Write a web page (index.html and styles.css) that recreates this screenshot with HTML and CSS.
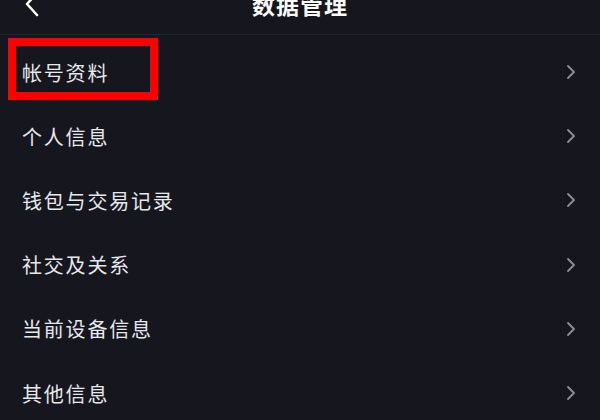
FILE: index.html
```html
<!DOCTYPE html>
<html lang="zh">
<head>
<meta charset="utf-8">
<link rel="stylesheet" href="styles.css">
</head>
<body>
<div class="page">
  <header class="topbar">
    <svg class="back" width="16" height="26" viewBox="0 0 16 26"><path d="M13 2 L3 13 L13 24" fill="none" stroke="#ffffff" stroke-width="2.6" stroke-linecap="round" stroke-linejoin="round"/></svg>
    <div class="title">数据管理</div>
  </header>
  <ul class="list">
    <li class="row highlight"><span class="label">帐号资料</span><svg class="chev" width="10" height="16" viewBox="0 0 10 16"><path d="M2 2 L8 8 L2 14" fill="none" stroke="#8e8e94" stroke-width="1.8" stroke-linecap="round" stroke-linejoin="round"/></svg><span class="mark"></span></li>
    <li class="row"><span class="label">个人信息</span><svg class="chev" width="10" height="16" viewBox="0 0 10 16"><path d="M2 2 L8 8 L2 14" fill="none" stroke="#8e8e94" stroke-width="1.8" stroke-linecap="round" stroke-linejoin="round"/></svg></li>
    <li class="row"><span class="label">钱包与交易记录</span><svg class="chev" width="10" height="16" viewBox="0 0 10 16"><path d="M2 2 L8 8 L2 14" fill="none" stroke="#8e8e94" stroke-width="1.8" stroke-linecap="round" stroke-linejoin="round"/></svg></li>
    <li class="row"><span class="label">社交及关系</span><svg class="chev" width="10" height="16" viewBox="0 0 10 16"><path d="M2 2 L8 8 L2 14" fill="none" stroke="#8e8e94" stroke-width="1.8" stroke-linecap="round" stroke-linejoin="round"/></svg></li>
    <li class="row"><span class="label">当前设备信息</span><svg class="chev" width="10" height="16" viewBox="0 0 10 16"><path d="M2 2 L8 8 L2 14" fill="none" stroke="#8e8e94" stroke-width="1.8" stroke-linecap="round" stroke-linejoin="round"/></svg></li>
    <li class="row"><span class="label">其他信息</span><svg class="chev" width="10" height="16" viewBox="0 0 10 16"><path d="M2 2 L8 8 L2 14" fill="none" stroke="#8e8e94" stroke-width="1.8" stroke-linecap="round" stroke-linejoin="round"/></svg></li>
  </ul>
</div>
</body>
</html>
```
FILE: styles.css
```css
html, body {
  margin: 0;
  padding: 0;
  background: #16161f;
}
.page {
  width: 600px;
  height: 420px;
  overflow: hidden;
  background: #16161f;
  font-family: "Noto Sans CJK SC", "Noto Sans", sans-serif;
  color: #e8e8ea;
}
.topbar {
  height: 60px;
  margin-top: -26px;
  border-bottom: 1px solid #24252e;
  display: flex;
  align-items: center;
  justify-content: center;
  position: relative;
}
.back {
  position: absolute;
  left: 24px;
  top: 17px;
}
.title {
  font-size: 23px;
  font-weight: 700;
  color: #ffffff;
  letter-spacing: 1px;
}
.list {
  list-style: none;
  margin: 0;
  padding: 5px 0 0 0;
}
.row {
  height: 64.2px;
  display: flex;
  align-items: center;
  justify-content: space-between;
  padding: 0 24px 0 22px;
  position: relative;
}
.label {
  font-size: 20px;
  letter-spacing: 1.8px;
}
.chev {
  display: block;
}
.mark {
  position: absolute;
  left: 8px;
  top: -2px;
  width: 134px;
  height: 46px;
  border: 8px solid #ff0000;
}
```
